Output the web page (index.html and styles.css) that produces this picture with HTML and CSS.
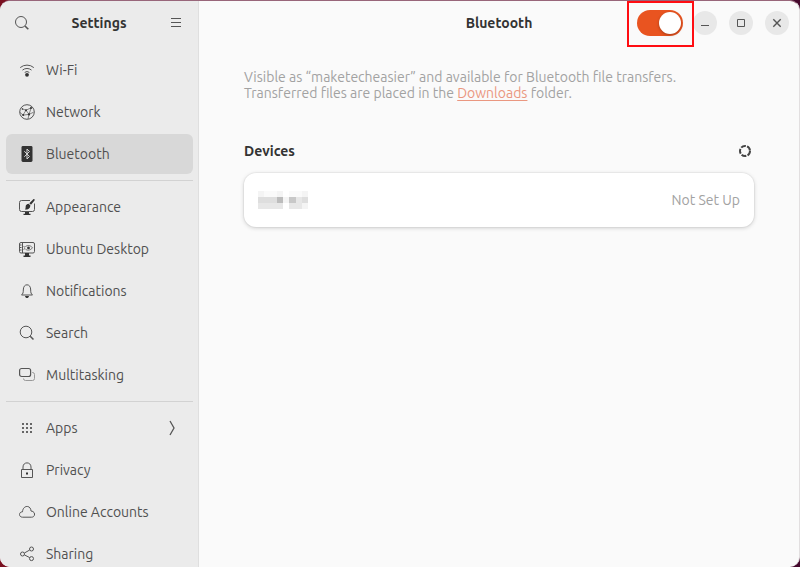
FILE: index.html
```html
<!DOCTYPE html>
<html lang="en">
  <head>
    <meta charset="UTF-8" />
    <meta name="viewport" content="width=device-width, initial-scale=1.0" />
    <title>Bluetooth - Settings</title>
    <link rel="stylesheet" href="styles.css">
  </head>
  <body>
    <div class="window">
      <!-- ======= Sidebar ======= -->
      <aside class="sidebar">
        <header class="sidebar-header">
          <button type="button" class="flat-button" aria-label="Search settings">
            <svg class="icon" viewBox="0 0 16 16"><circle cx="7" cy="7" r="5.5" /><path d="M11 11l3.3 3.3" stroke-width="1.6" /></svg>
          </button>
          <h2 class="title">Settings</h2>
          <button type="button" class="flat-button" aria-label="Main menu">
            <svg class="icon" viewBox="0 0 16 16"><path d="M3 3.5h10M3 7.500h10M3 11.500h10" /></svg>
          </button>
        </header>

        <nav class="nav">
          <ul class="nav-group">
            <li><a href="#wifi" class="nav-link">
              <svg class="icon" viewBox="0 0 16 16"><path d="M1.2 5.6a10.5 10.5 0 0 1 13.6 0M3.5 8.1a7 7 0 0 1 9 0M5.7 10.4a3.8 3.8 0 0 1 4.6 0" /><circle class="fill" cx="8" cy="12.8" r="1.9" /></svg>
              Wi-Fi</a></li>
            <li><a href="#network" class="nav-link">
              <svg class="icon" viewBox="0 0 16 16"><circle cx="8" cy="8" r="7.3" /><path d="M3 4.8l4 1.4 5.2-2.4M7 6.2l3 4.2M12.2 3.8L10 10.4l-6 .7M1 8.4l3 2.7M7 6.2l-3 4.9M10 10.4l4.6-2.2M10 10.4l-1 4.5" stroke-width=".7" /><circle class="fill" cx="7" cy="6.2" r="1" /><circle class="fill" cx="12" cy="4" r="1" /><circle class="fill" cx="10" cy="10.4" r="1.1" /><circle class="fill" cx="4.2" cy="11" r="1" /><circle class="fill" cx="3.4" cy="5" r=".8" /></svg>
              Network</a></li>
            <li><a href="#bluetooth" class="nav-link active" aria-current="page">
              <svg class="icon" viewBox="0 0 16 16"><rect class="fill" x="2.5" y="0" width="11" height="16" rx="1.4" /><path class="light" d="M5.3 5.2l5.2 5.3L8 13V3l2.5 2.5-5.2 5.3" /></svg>
              Bluetooth</a></li>
          </ul>
          <hr class="separator">
          <ul class="nav-group">
            <li><a href="#appearance" class="nav-link">
              <svg class="icon" viewBox="0 0 16 16"><path d="M11 1.5H2.5a2 2 0 0 0-2 2v7a2 2 0 0 0 2 2h11a2 2 0 0 0 2-2V4.5" /><path class="fill" d="M6 13h4v1.8h1.5V16h-7v-1.2H6zM9.6 4.8l1.8 1.6c-.2 3-2.5 4.3-5.6 4.2.9-.9.8-1.4.8-2.7 0-1.8 1.3-3 3-3.1zM10.3 4.2L14.3.2c1-.6 1.8.3 1.2 1.2L12 5.8z" /></svg>
              Appearance</a></li>
            <li><a href="#desktop" class="nav-link">
              <svg class="icon" viewBox="0 0 16 16"><rect x=".5" y="1.5" width="15" height="10.5" rx="1.5" /><path d="M3.5 1.5V12M1 4h1.5M1 6.5h1.5M1 9h1.5" /><path d="M4.500 5.500L6 6.200c1.800-2.500 5.500-2.200 7.500.6-2 2.700-5.700 3.200-7.500.8l-1.500.8" stroke-width=".8" /><circle class="fill" cx="9.500" cy="6.900" r="1.400" /><path class="fill" d="M6 12h4v2.600h1.500V16h-7v-1.400H6z" /></svg>
              Ubuntu Desktop</a></li>
            <li><a href="#notifications" class="nav-link">
              <svg class="icon" viewBox="0 0 16 16"><path d="M2.5 12c1.5-1.3 1.8-2.3 1.8-5 0-3.3 1.5-5.2 3.7-5.2s3.7 1.9 3.7 5.2c0 2.7.3 3.7 1.8 5z" /><path class="fill" d="M6 13h4c-.3 1.6-1 2-2 2s-1.700-.4-2-2z" /></svg>
              Notifications</a></li>
            <li><a href="#search" class="nav-link">
              <svg class="icon" viewBox="0 0 16 16"><circle cx="7" cy="7" r="5.8" /><path d="M11.2 11.2l3.3 3.3" stroke-width="1.5" /></svg>
              Search</a></li>
            <li><a href="#multitasking" class="nav-link">
              <svg class="icon" viewBox="0 0 16 16"><path class="faded" d="M13 5.5h.5a2 2 0 0 1 2 2v4a2 2 0 0 1-2 2h-7a2 2 0 0 1-2-2" /><rect x=".6" y="1.5" width="11" height="8" rx="2" stroke-width="1.200" /></svg>
              Multitasking</a></li>
          </ul>
          <hr class="separator">
          <ul class="nav-group">
            <li><a href="#apps" class="nav-link">
              <svg class="icon" viewBox="0 0 16 16"><path class="soft" d="M3 3h2v2H3zM7 3h2v2H7zM11 3h2v2h-2zM3 7h2v2H3zM7 7h2v2H7zM11 7h2v2h-2zM3 11h2v2H3zM7 11h2v2H7zM11 11h2v2h-2z" /></svg>
              Apps
              <svg class="icon chevron" viewBox="0 0 16 16"><path d="M6 1l4 7-4 7" stroke-width="1.3" /></svg></a></li>
            <li><a href="#privacy" class="nav-link">
              <svg class="icon" viewBox="0 0 16 16"><path d="M2.5 7.5h11v8h-11zM4 7.5V5c0-5.500 8-5.500 8 0v2.500" /><rect class="fill" x="7" y="10.5" width="2" height="2" /></svg>
              Privacy</a></li>
            <li><a href="#accounts" class="nav-link">
              <svg class="icon" viewBox="0 0 16 16"><path d="M3.500 13.200C-.5 13.200-.5 7.800 3.500 7.800 4 .8 11.800.8 12 7c4.700.2 4.700 6.200.5 6.200z" /></svg>
              Online Accounts</a></li>
            <li><a href="#sharing" class="nav-link">
              <svg class="icon" viewBox="0 0 16 16"><circle cx="3.5" cy="8" r="2" /><circle cx="12.5" cy="3" r="2" /><circle cx="12.5" cy="12.6" r="2" /><path d="M5.4 7L10.7 4M5.4 8.9l5.3 2.7" /></svg>
              Sharing</a></li>
          </ul>
        </nav>
      </aside>

      <!-- ======= Bluetooth Panel ======= -->
      <main class="panel">
        <header class="panel-header">
          <h1 class="title">Bluetooth</h1>
          <div class="controls">
            <label class="switch">
              <input type="checkbox" class="switch-input" aria-label="Bluetooth" checked />
            </label>
            <div class="window-buttons">
              <button type="button" class="window-button" aria-label="Minimize">
                <svg class="icon" viewBox="0 0 16 16"><path d="M4 10.5h8" /></svg>
              </button>
              <button type="button" class="window-button" aria-label="Maximize">
                <svg class="icon" viewBox="0 0 16 16"><path d="M4.5 4.5h7v7h-7z" /></svg>
              </button>
              <button type="button" class="window-button" aria-label="Close">
                <svg class="icon" viewBox="0 0 16 16"><path d="M4.3 4.3l7.4 7.4M11.7 4.3l-7.4 7.4" stroke-width="1.4" /></svg>
              </button>
            </div>
          </div>
        </header>

        <div class="content">
          <p class="hint">Visible as “maketecheasier” and available for Bluetooth file transfers.<br>Transferred files are placed in the <a href="#downloads">Downloads</a> folder.</p>

          <div class="section-header">
            <h2 class="title">Devices</h2>
            <svg class="spinner" viewBox="0 0 14 14"><circle cx="7" cy="7" r="5" /></svg>
          </div>

          <ul class="devices">
            <li><button type="button" class="device" aria-label="Hidden device, Not Set Up">
              <svg class="pixels" viewBox="0 0 8 3" preserveAspectRatio="none" shape-rendering="crispEdges">
                <path fill="#f4f4f4" d="M0 0h1v1H0zM3 0h1v1H3zM7 0h1v1H7zM4 1h1v1H4zM7 2h1v1H7z" />
                <path fill="#fafafa" d="M1 0h2v1H1zM5 0h2v1H5z" />
                <path fill="#dedede" d="M0 1h3v1H0zM7 1h1v1H7z" />
                <path fill="#e7e7e7" d="M6 1h1v1H6zM0 2h4v1H0zM5 2h2v1H5z" />
                <path fill="#bcbcbc" d="M3 1h1v1H3z" />
                <path fill="#c8c8c8" d="M5 1h1v1H5z" />
              </svg>
              <span class="status">Not Set Up</span>
            </button></li>
          </ul>
        </div>
      </main>
    </div>
  </body>
</html>
```

FILE: styles.css
```css
* {
  box-sizing: border-box;
}

body {
  margin: 0;
  font-family: Ubuntu, "Noto Sans", sans-serif;
  font-size: 14px;
  color: #505050;
  background: linear-gradient(to right, #7a1020, #45082c 50%, #45082c);
}

ul {
  list-style: none;
  margin: 0;
  padding: 0;
}

button {
  font: inherit;
  color: inherit;
  border: none;
  cursor: pointer;
}

.window {
  display: flex;
  height: 100vh;
  overflow: hidden;
  border-top: 1px solid #98667a;
  border-right: 1px solid #e2dfe0;
  border-radius: 10px;
  background-color: #fafafa;
}

.title {
  margin: 0;
  font-size: 14px;
  font-weight: 600;
  color: #333;
}

/* ======= Icons ======= */
.icon {
  display: block;
  flex: none;
  width: 16px;
  height: 16px;
  fill: none;
  stroke: #555;
  stroke-width: 1;
}

.icon .fill {
  fill: #333;
  stroke: none;
}

.icon .soft {
  fill: #666;
  stroke: none;
}

.icon .light {
  stroke: #d8d8d8;
}

.icon .faded {
  stroke: #999;
}

/* ======= Sidebar ======= */
.sidebar {
  flex: none;
  width: 199px;
  background-color: #ebebeb;
  border-right: 1px solid #dfdfdf;
}

.sidebar-header {
  display: flex;
  justify-content: space-between;
  align-items: center;
  height: 44px;
  padding: 0 14px;
}

.flat-button {
  padding: 0;
  background: none;
}

.nav {
  padding: 5px 5px 5px 6px;
}

.nav-group {
  display: flex;
  flex-direction: column;
  gap: 2px;
}

.nav-link {
  display: flex;
  align-items: center;
  gap: 11px;
  height: 40px;
  padding: 0 13px;
  border-radius: 6px;
  color: inherit;
  text-decoration: none;
}

.nav-link.active {
  background-color: #d8d8d8;
}

.chevron {
  margin-left: auto;
}

.separator {
  height: 1px;
  margin: 6px 0;
  border: none;
  background-color: #d2d2d2;
}

/* ======= Panel ======= */
.panel {
  flex: 1;
  min-width: 0;
}

.panel-header {
  display: grid;
  grid-template-columns: 1fr auto 1fr;
  align-items: center;
  height: 44px;
  padding: 0 10px;
}

.panel-header .title {
  grid-column: 2;
}

.controls {
  display: flex;
  justify-content: flex-end;
  align-items: center;
  gap: 10px;
}

.window-buttons {
  display: flex;
  gap: 12px;
}

.window-button {
  display: flex;
  justify-content: center;
  align-items: center;
  width: 24px;
  height: 24px;
  padding: 0;
  border-radius: 50%;
  background-color: #e8e8e8;
}

.switch {
  position: relative;
  z-index: 1;
}

/* red marker around the switch */
.switch::after {
  content: "";
  position: absolute;
  inset: -9px -11px -11px -10px;
  border: 2px solid #ff0d12;
  pointer-events: none;
}

.switch-input {
  appearance: none;
  display: flex;
  width: 46px;
  height: 26px;
  margin: 0;
  padding: 2px;
  border-radius: 13px;
  background-color: #ccc;
  cursor: pointer;
}

.switch-input::before {
  content: "";
  width: 22px;
  height: 22px;
  border-radius: 50%;
  background-color: white;
  box-shadow: 0 1px 3px rgba(0, 0, 0, 0.3);
}

.switch-input:checked {
  justify-content: flex-end;
  background-color: #e95420;
}

.content {
  max-width: 600px;
  margin: 0 auto;
  padding: 24px 45px;
}

.hint {
  margin: 0;
  line-height: 16px;
  color: #a2a2a2;
}

.hint a {
  color: #ea9780;
  text-underline-offset: 2px;
}

.section-header {
  display: flex;
  justify-content: space-between;
  align-items: center;
  height: 20px;
  margin: 40px 2px 12px 0;
}

.spinner {
  width: 14px;
  height: 14px;
  fill: none;
  stroke: #444;
  stroke-width: 2;
  stroke-dasharray: 5 1.28;
}

.devices {
  border-radius: 12px;
  background-color: white;
  box-shadow: 0 0 0 1px rgba(0, 0, 0, 0.03), 0 1px 4px rgba(0, 0, 0, 0.18);
}

.device {
  display: flex;
  justify-content: space-between;
  align-items: center;
  width: 100%;
  height: 54px;
  padding: 0 14px;
  background: none;
}

.pixels {
  width: 50px;
  height: 18px;
}

.status {
  color: #a2a2a2;
}
```
